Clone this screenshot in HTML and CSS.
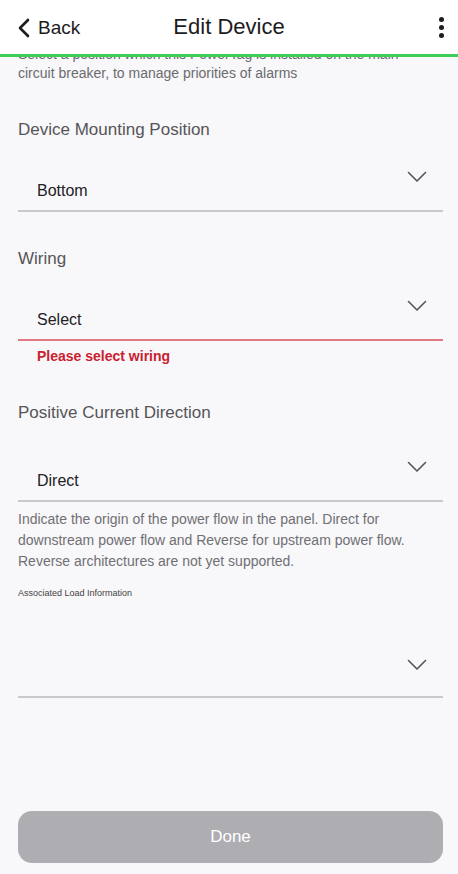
FILE: index.html
```html
<!DOCTYPE html>
<html lang="en">
<head>
    <meta charset="UTF-8">
    <meta name="viewport" content="width=device-width, initial-scale=1.0">
    <title>Edit Device</title>
    <link rel="stylesheet" href="styles.css">
</head>
<body>
    <div class="app">
        <header class="top-bar">
            <a class="back-link">
                <svg class="back-icon" viewBox="0 0 12 20" width="12" height="20">
                    <polyline points="10,2 2,10 10,18" fill="none" stroke="#1c1c1e" stroke-width="2.6" stroke-linecap="round" stroke-linejoin="round"/>
                </svg>
                <span>Back</span>
            </a>
            <h1 class="title">Edit Device</h1>
            <div class="more">
                <span class="dot"></span>
                <span class="dot"></span>
                <span class="dot"></span>
            </div>
        </header>

        <main class="form">
            <p class="intro">
                <span class="intro-cut">Select a position which this PowerTag is installed on the main</span>
                circuit breaker, to manage priorities of alarms
            </p>

            <div class="field">
                <label class="field-label">Device Mounting Position</label>
                <div class="select">
                    <span class="select-value">Bottom</span>
                    <svg class="chevron" viewBox="0 0 20 12" width="20" height="12">
                        <polyline points="1.5,1.5 10,10 18.5,1.5" fill="none" stroke="#555" stroke-width="1.6" stroke-linecap="round" stroke-linejoin="round"/>
                    </svg>
                </div>
            </div>

            <div class="field">
                <label class="field-label">Wiring</label>
                <div class="select select-error">
                    <span class="select-value">Select</span>
                    <svg class="chevron" viewBox="0 0 20 12" width="20" height="12">
                        <polyline points="1.5,1.5 10,10 18.5,1.5" fill="none" stroke="#555" stroke-width="1.6" stroke-linecap="round" stroke-linejoin="round"/>
                    </svg>
                </div>
                <p class="error-text">Please select wiring</p>
            </div>

            <div class="field field-direction">
                <label class="field-label">Positive Current Direction</label>
                <div class="select">
                    <span class="select-value">Direct</span>
                    <svg class="chevron" viewBox="0 0 20 12" width="20" height="12">
                        <polyline points="1.5,1.5 10,10 18.5,1.5" fill="none" stroke="#555" stroke-width="1.6" stroke-linecap="round" stroke-linejoin="round"/>
                    </svg>
                </div>
                <p class="help-text">Indicate the origin of the power flow in the panel. Direct for downstream power flow and Reverse for upstream power flow. Reverse architectures are not yet supported.</p>
            </div>

            <div class="field field-load">
                <label class="field-label small">Associated Load Information</label>
                <div class="select select-tall">
                    <span class="select-value"></span>
                    <svg class="chevron" viewBox="0 0 20 12" width="20" height="12">
                        <polyline points="1.5,1.5 10,10 18.5,1.5" fill="none" stroke="#555" stroke-width="1.6" stroke-linecap="round" stroke-linejoin="round"/>
                    </svg>
                </div>
            </div>
        </main>

        <footer class="bottom">
            <button class="done-button">Done</button>
        </footer>
    </div>
</body>
</html>
```

FILE: styles.css
```css
:root {
    --bg: #f8f7fa;
    --green: #3dcd58;
    --label: #555558;
    --value: #222224;
    --line: #c9c8cc;
    --error: #c9212f;
}

body, html {
    margin: 0;
    padding: 0;
    height: 100%;
    font-family: "Liberation Sans", Arial, sans-serif;
    background-color: var(--bg);
    overflow: hidden;
}

.app {
    display: flex;
    flex-direction: column;
    height: 874px;
}

.top-bar {
    position: relative;
    display: flex;
    align-items: center;
    justify-content: space-between;
    height: 54px;
    padding: 0 14px 0 18px;
    background: #ffffff;
    border-bottom: 3px solid var(--green);
    z-index: 1;
}

.back-link {
    display: flex;
    align-items: center;
    gap: 8px;
    font-size: 19px;
    color: #1c1c1e;
    padding-top: 1px;
}

.back-icon {
    display: block;
}

.title {
    position: absolute;
    left: 0;
    right: 0;
    margin: 0;
    text-align: center;
    font-size: 22px;
    font-weight: normal;
    color: #1c1c1e;
    pointer-events: none;
}

.more {
    display: flex;
    flex-direction: column;
    gap: 3px;
    padding-top: 1px;
}

.dot {
    width: 5px;
    height: 5px;
    border-radius: 50%;
    background: #1c1c1e;
}

.form {
    flex: 1;
    padding: 0 15px 0 18px;
    margin-top: -12px;
}

.intro {
    margin: 0;
    font-size: 14px;
    line-height: 19px;
    color: #6b6b6e;
}

.intro-cut {
    display: block;
}

.field {
    margin-top: 37px;
}

.field-label {
    display: block;
    font-size: 17px;
    color: var(--label);
}

.field-label.small {
    font-size: 9px;
    color: #444;
}

.select {
    display: flex;
    align-items: flex-end;
    justify-content: space-between;
    height: 72px;
    padding: 0 16px 0 19px;
    border-bottom: 2px solid var(--line);
    box-sizing: border-box;
}

.select-value {
    font-size: 16px;
    color: var(--value);
    padding-bottom: 10px;
}

.chevron {
    margin-bottom: 27px;
}

.select-error {
    border-bottom-color: #e07a82;
}

.error-text {
    margin: 7px 0 0 19px;
    font-size: 14px;
    font-weight: bold;
    color: var(--error);
}

.field-direction {
    margin-top: 39px;
}

.field-direction .select {
    height: 79px;
}

.help-text {
    margin: 7px 0 0;
    font-size: 14px;
    line-height: 21px;
    color: #707073;
}

.field-load {
    margin-top: 16px;
}

.select-tall {
    height: 100px;
}

.select-tall .chevron {
    margin-bottom: 25px;
}

.bottom {
    padding: 0 15px 11px 18px;
}

.done-button {
    display: block;
    width: 100%;
    height: 52px;
    border: none;
    border-radius: 14px;
    background: #aeadb2;
    color: #ffffff;
    font-family: inherit;
    font-size: 17px;
}
```
